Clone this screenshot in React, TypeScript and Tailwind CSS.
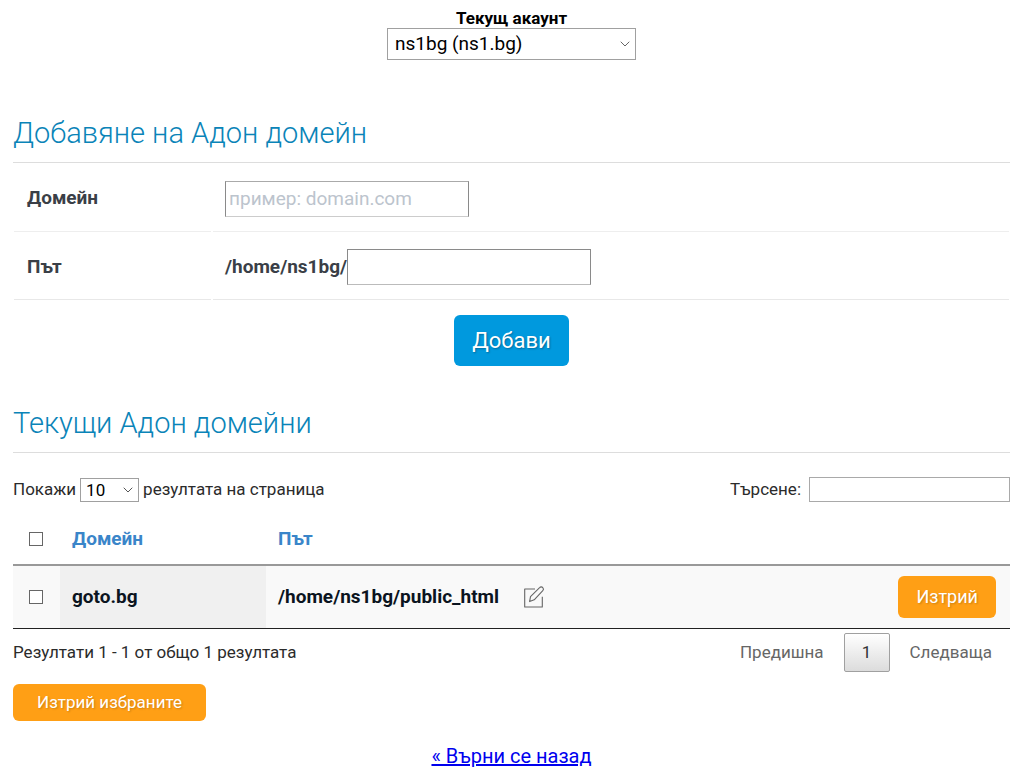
import { useState } from "react";
import { LuChevronDown } from "react-icons/lu";

const domains = [{ name: "goto.bg", path: "/home/ns1bg/public_html" }];

const checkboxClass =
  "block h-[14px] w-[14px] appearance-none border border-[#666] bg-white checked:bg-[#0099de]";

const EditIcon = () => (
  <svg
    viewBox="0 0 22 22"
    className="h-[22px] w-[22px]"
    fill="none"
    stroke="#666"
    strokeWidth="1.1"
    strokeLinejoin="round"
  >
    <path d="M12 3H1.7v18h17.6V10.8" />
    <path d="M6.6 15.6l.9-5L16.6 1.6a2.1 2.1 0 0 1 3.2 0 2.2 2.2 0 0 1 0 3L11.2 13.8z" />
  </svg>
);

const SectionTitle = ({ children }: { children: string }) => (
  <h2 className="border-b border-[#ddd] pb-[11px] text-[29px] leading-9 font-light text-[#0a84b8]">
    {children}
  </h2>
);

const AddDomainForm = () => {
  return (
    <form onSubmit={(e) => e.preventDefault()}>
      <div className="grid grid-cols-[197px_1fr] gap-x-[2px] px-px text-[19px] font-bold text-[#3a3f47]">
        <label
          htmlFor="domain"
          className="flex h-[69px] items-center border-b border-[#eee] pt-[3px] pl-[13px]"
        >
          Домейн
        </label>
        <div className="flex h-[69px] items-center border-b border-[#eee] px-3 pt-[3px]">
          <input
            id="domain"
            type="text"
            placeholder="пример: domain.com"
            className="h-9 w-[244px] border border-[#8a8a8a] border-t-[#aaa] border-b-[#ccc] px-[3px] font-normal placeholder:text-[#bcc4cd]"
          />
        </div>
        <label
          htmlFor="path"
          className="flex h-[68px] items-center border-b border-[#e8e8e8] pt-[3px] pl-[13px]"
        >
          Път
        </label>
        <div className="flex h-[68px] items-center border-b border-[#e8e8e8] px-3 pt-[3px]">
          <span>/home/ns1bg/</span>
          <input
            id="path"
            type="text"
            className="h-9 w-[244px] border border-[#8a8a8a] border-b-[#bbb] px-[3px] font-normal"
          />
        </div>
      </div>
      <div className="mt-[15px] text-center">
        <button
          type="submit"
          className="h-[51px] rounded-md bg-[#0099de] px-[18px] text-[22px] text-white text-shadow-[1px_1px_2px_rgba(0,0,0,0.3)]"
        >
          Добави
        </button>
      </div>
    </form>
  );
};

const DomainsTable = () => {
  const [selected, setSelected] = useState<string[]>([]);

  const toggle = (name: string) =>
    setSelected((prev) =>
      prev.includes(name) ? prev.filter((n) => n !== name) : [...prev, name]
    );

  return (
    <table className="mt-3 w-full border-collapse text-left text-[19px] font-bold">
      <thead>
        <tr className="h-[50px] border-b-2 border-[#999] text-[#3a85c9]">
          <th className="w-[47px] pl-4">
            <input
              type="checkbox"
              aria-label="Избери всички"
              className={checkboxClass}
              checked={selected.length === domains.length}
              onChange={(e) =>
                setSelected(e.target.checked ? domains.map((d) => d.name) : [])
              }
            />
          </th>
          <th className="w-[206px] px-3">Домейн</th>
          <th className="px-3">Път</th>
          <th></th>
        </tr>
      </thead>
      <tbody>
        {domains.map((domain) => (
          <tr
            key={domain.name}
            className="h-16 border-b border-[#222] bg-[#f9f9f9] text-[#0b1420]"
          >
            <td className="pl-4">
              <input
                type="checkbox"
                aria-label={domain.name}
                className={checkboxClass}
                checked={selected.includes(domain.name)}
                onChange={() => toggle(domain.name)}
              />
            </td>
            <td className="bg-[#f0f0f0] px-3">{domain.name}</td>
            <td className="px-3">
              <div className="flex items-center gap-6">
                {domain.path}
                <button type="button" aria-label="Редактирай">
                  <EditIcon />
                </button>
              </div>
            </td>
            <td className="pr-[14px] text-right">
              <button
                type="button"
                className="h-[42px] rounded-md bg-[#ff9f15] px-[18px] text-[18px] font-normal text-white text-shadow-[1px_1px_2px_rgba(0,0,0,0.2)]"
              >
                Изтрий
              </button>
            </td>
          </tr>
        ))}
      </tbody>
    </table>
  );
};

export default function App() {
  return (
    <main className="bg-white pt-[9px] pr-[14px] pb-3 pl-[13px] font-[Roboto,sans-serif] text-[17px] text-[#2b2b2b]">
      <div className="flex flex-col items-center text-black">
        <label htmlFor="account" className="text-[17px] leading-[19px] font-bold">
          Текущ акаунт
        </label>
        <div className="relative">
          <select
            id="account"
            className="block h-8 w-[249px] appearance-none border border-[#a0a0a0] bg-white px-[7px] text-[19px]"
          >
            <option>ns1bg (ns1.bg)</option>
          </select>
          <LuChevronDown className="pointer-events-none absolute top-2 right-[3px] h-4 w-4 stroke-[1.5] text-[#666]" />
        </div>
      </div>

      <div className="mt-[55px]">
        <SectionTitle>Добавяне на Адон домейн</SectionTitle>
        <AddDomainForm />
      </div>

      <div className="mt-[39px]">
        <SectionTitle>Текущи Адон домейни</SectionTitle>
        <div className="mt-6 flex items-center justify-between">
          <label className="flex items-center gap-1">
            Покажи
            <span className="relative">
              <select className="block h-6 w-[59px] appearance-none border border-[#a0a0a0] bg-white px-[5px] text-[17px] leading-5 text-black">
                <option>10</option>
                <option>25</option>
                <option>50</option>
              </select>
              <LuChevronDown className="pointer-events-none absolute top-1 right-[3px] h-4 w-4 stroke-[1.5] text-[#555]" />
            </span>
            резултата на страница
          </label>
          <label className="flex items-center gap-2">
            Търсене:
            <input
              type="search"
              className="h-[25px] w-[201px] border border-[#a9a9a9] px-1"
            />
          </label>
        </div>

        <DomainsTable />

        <div className="mt-1 flex items-center justify-between">
          <p>Резултати 1 - 1 от общо 1 резултата</p>
          <div className="flex items-center pr-[18px] text-[#666]">
            <button type="button">Предишна</button>
            <button
              type="button"
              className="mx-5 h-[39px] w-[46px] rounded-xs border border-[#a0a0a0] bg-linear-to-b from-white to-[#dcdcdc] text-[#333]"
            >
              1
            </button>
            <button type="button">Следваща</button>
          </div>
        </div>
        <button
          type="button"
          className="mt-3 block h-[37px] rounded-md bg-[#ff9f15] px-6 text-[17px] text-white text-shadow-[1px_1px_2px_rgba(0,0,0,0.2)]"
        >
          Изтрий избраните
        </button>
      </div>

      <div className="mt-[19px] text-center text-[20px] leading-8">
        <a href="#" className="text-[#0000ee] underline">
          « Върни се назад
        </a>
      </div>
    </main>
  );
}
